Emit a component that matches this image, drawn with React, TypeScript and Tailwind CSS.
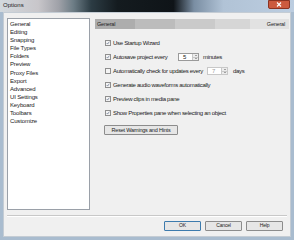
const font = { fontFamily: '"Liberation Sans", Arial, sans-serif' };

const categories = [
  "General",
  "Editing",
  "Snapping",
  "File Types",
  "Folders",
  "Preview",
  "Proxy Files",
  "Export",
  "Advanced",
  "UI Settings",
  "Keyboard",
  "Toolbars",
  "Customize",
];

// blurred desktop seen through the aero glass
function Glass() {
  return (
    <svg className="absolute inset-0" width="294" height="12" preserveAspectRatio="none">
      <defs>
        <linearGradient id="glass" x1="0" x2="1" y1="0" y2="0">
          <stop offset="0" stopColor="#d3d9de" />
          <stop offset="0.13" stopColor="#c8c6ca" />
          <stop offset="0.2" stopColor="#9fa1a8" />
          <stop offset="0.25" stopColor="#6c7c85" />
          <stop offset="0.31" stopColor="#2c3c44" />
          <stop offset="0.4" stopColor="#141b1f" />
          <stop offset="0.59" stopColor="#0f1418" />
          <stop offset="0.66" stopColor="#7a8ea3" />
          <stop offset="0.76" stopColor="#b1c3d6" />
          <stop offset="1" stopColor="#bccde0" />
        </linearGradient>
      </defs>
      <rect width="294" height="12" fill="url(#glass)" />
    </svg>
  );
}

function Check({ on }: { on: boolean }) {
  return (
    <div className="w-[6px] h-[6px] border border-[#8f8f8f] bg-[#f4f4f4] flex items-center justify-center shrink-0">
      {on && (
        <svg width="6" height="6" viewBox="0 0 6 6">
          <path d="M1 3 L2.4 4.6 L5 1" fill="none" stroke="#4a5a7a" strokeWidth="0.9" />
        </svg>
      )}
    </div>
  );
}

function Spin({ value, disabled }: { value: string; disabled?: boolean }) {
  return (
    <div className={`flex shrink-0 w-[21px] h-[8px] border ${disabled ? "border-[#c8c8c8] text-[#a0a0a0]" : "border-[#9a9a9a] text-[#222]"} bg-white`}>
      <div className="flex-1 pl-[4px] leading-[6px]">{value}</div>
      <div className="w-[6px] flex flex-col border-l border-[#c8c8c8] bg-[#ececec]">
        <div className="flex-1 flex items-center justify-center border-b border-[#c8c8c8]">
          <div className="w-0 h-0 border-l-[1.5px] border-r-[1.5px] border-b-[1.5px] border-l-transparent border-r-transparent border-b-[#555]" />
        </div>
        <div className="flex-1 flex items-center justify-center">
          <div className="w-0 h-0 border-l-[1.5px] border-r-[1.5px] border-t-[1.5px] border-l-transparent border-r-transparent border-t-[#555]" />
        </div>
      </div>
    </div>
  );
}

function Btn({ label, primary }: { label: string; primary?: boolean }) {
  return (
    <div
      className={`w-[37px] h-[10px] rounded-[1px] border ${primary ? "border-[#3d7bad]" : "border-[#8c8c8c]"} bg-[#e6e6e6] flex items-center justify-center text-[5px] tracking-[-0.2px] text-[#222]`}
    >
      {label}
    </div>
  );
}

export default function App() {
  return (
    <div className="w-[294px] h-[240px] overflow-hidden flex flex-col bg-[#a9bccf]" style={font}>
      {/* title bar */}
      <div className="relative h-[12px] shrink-0">
        <Glass />
        <div className="relative flex items-start h-full">
          <div className="pl-[3px] pt-[2px] text-[6px] leading-[7px] text-[#1a1a1a]">Options</div>
          <div className="flex-1" />
          <div className="w-[22px] h-[9px] mr-[4px] rounded-b-[2px] bg-[#cc5a3e] border border-[#8a3322] flex items-center justify-center">
            <svg width="6" height="5" viewBox="0 0 6 5">
              <path d="M1 0.5 L5 4.5 M5 0.5 L1 4.5" stroke="white" strokeWidth="1.1" />
            </svg>
          </div>
        </div>
      </div>

      {/* client area */}
      <div className="flex-1 mx-[3px] mb-[3px] bg-[#f0f0f0] border border-[#c4ccd4] flex flex-col">
        <div className="flex pt-[5px] pl-[3px] pr-[1px]">
          <div className="w-[83px] h-[192px] bg-white border border-[#9aa0a8] pl-[2px] pt-[1px] shrink-0">
            {categories.map((c) => (
              <div key={c} className="h-[8.1px] leading-[8px] text-[6px] tracking-[-0.15px] text-[#222]">
                {c}
              </div>
            ))}
          </div>

          <div className="flex-1 ml-[5px] mt-[1px] flex flex-col">
            <div className="h-[10px] flex text-[5.5px] tracking-[-0.2px] text-[#222]">
              <div className="w-[40px] bg-[#adadad] pl-[2px] leading-[10px]">General</div>
              <div className="w-[40px] bg-[#bcbcbc]" />
              <div className="w-[40px] bg-[#cacaca]" />
              <div className="w-[35px] bg-[#d6d6d6]" />
              <div className="flex-1 bg-[#e2e2e2] text-right pr-[4px] leading-[10px]">General</div>
            </div>

            <div className="mt-[7px] pl-[10px] flex flex-col text-[6px] tracking-[-0.3px] text-[#222] whitespace-nowrap">
              <div className="h-[14px] flex items-center gap-[2px]">
                <Check on />
                <span>Use Startup Wizard</span>
              </div>
              <div className="h-[14px] flex items-center gap-[2px]">
                <Check on />
                <span className="w-[63px]">Autosave project every</span>
                <Spin value="5" />
                <span className="ml-[2px]">minutes</span>
              </div>
              <div className="h-[14px] flex items-center gap-[2px]">
                <Check on={false} />
                <span className="w-[92px]">Automatically check for updates every</span>
                <Spin value="7" disabled />
                <span className="ml-[3px]">days</span>
              </div>
              <div className="h-[14px] flex items-center gap-[2px]">
                <Check on />
                <span>Generate audio waveforms automatically</span>
              </div>
              <div className="h-[14px] flex items-center gap-[2px]">
                <Check on />
                <span>Preview clips in media pane</span>
              </div>
              <div className="h-[14px] flex items-center gap-[2px]">
                <Check on />
                <span>Show Properties pane when selecting an object</span>
              </div>
              <div className="mt-[5px] -ml-[1px] w-[74px] h-[10px] rounded-[1px] border border-[#8c8c8c] bg-[#e6e6e6] flex items-center justify-center text-[5.5px] tracking-[-0.2px]">
                Reset Warnings and Hints
              </div>
            </div>
          </div>
        </div>

        <div className="mt-[5px] mx-[3px] border-t border-[#c8c8c8] border-b border-b-white" />

        <div className="flex justify-end gap-[4px] pr-[7px] mt-[4px]">
          <Btn label="OK" primary />
          <Btn label="Cancel" />
          <Btn label="Help" />
        </div>
      </div>
    </div>
  );
}
